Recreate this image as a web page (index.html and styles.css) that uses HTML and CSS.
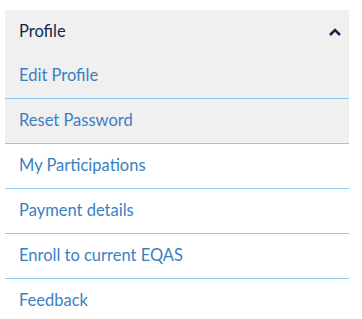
FILE: index.html
```html
<!DOCTYPE html>
<html lang="en">
<head>
  <meta charset="UTF-8">
  <meta name="viewport" content="width=device-width, initial-scale=1.0">
  <title>Profile</title>
  <link rel="stylesheet" href="styles.css">
</head>
<body>

  <div class="menu">
    <div class="menu-head">
      <span>Profile</span>
      <svg class="chevron" width="14" height="10" viewBox="0 0 14 10">
        <path d="M2 8 L7 3 L12 8" fill="none" stroke="#13294b" stroke-width="2.6"/>
      </svg>
    </div>
    <a class="menu-item grey" href="#">Edit Profile</a>
    <a class="menu-item grey" href="#">Reset Password</a>
    <a class="menu-item" href="#">My Participations</a>
    <a class="menu-item" href="#">Payment details</a>
    <a class="menu-item" href="#">Enroll to current EQAS</a>
    <a class="menu-item last" href="#">Feedback</a>
  </div>

</body>
</html>
```

FILE: styles.css
```css
body {
  font-family: 'Lato', sans-serif;
  background-color: #ffffff;
  margin: 0;
  padding: 10px 13px 0 5px;
}

.menu {
  width: 344px;
}

.menu-head {
  display: flex;
  justify-content: space-between;
  align-items: center;
  height: 44px;
  padding: 0 7px 0 14px;
  background-color: #f0f0f0;
  color: #13294b;
  font-size: 16.5px;
}

.menu-head span {
  padding-bottom: 3px;
}

.menu-item {
  display: flex;
  align-items: center;
  box-sizing: border-box;
  height: 45px;
  padding: 0 0 3px 14px;
  color: #3a7fc4;
  font-size: 16.5px;
  text-decoration: none;
  border-bottom: 1px solid #8ec9f2;
}

.menu-item.grey {
  background-color: #f0f0f0;
}

.menu-item.last {
  border-bottom: none;
}
```
